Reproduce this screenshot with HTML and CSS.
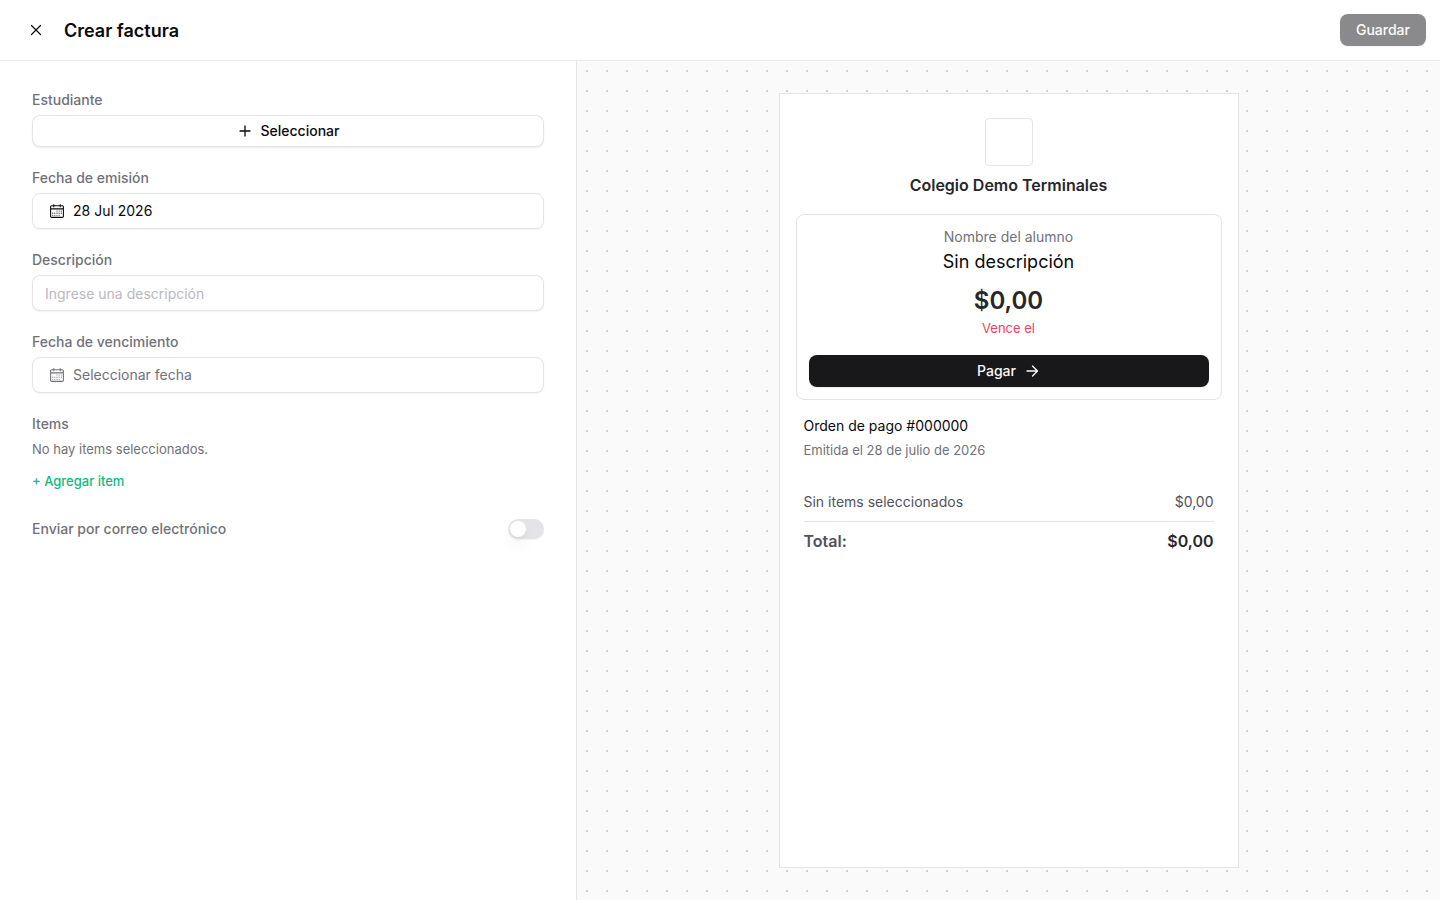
FILE: index.html
```html
<!DOCTYPE html>
<html lang="es">
<head>
    <meta charset="utf-8">
    <meta name="viewport" content="width=device-width, initial-scale=1">
    <title>Crear factura</title>
    <link rel="stylesheet" href="styles.css">
</head>
<body>
    <!-- Calendar icon shared by both date fields -->
    <svg class="sprite" aria-hidden="true">
        <symbol id="calendar" viewBox="0 0 15 15">
            <path fill="currentColor" fill-rule="evenodd" d="M4.5 1a.5.5 0 0 1 .5.5V2h5v-.5a.5.5 0 0 1 1 0V2h1.5A1.5 1.5 0 0 1 14 3.5v9a1.5 1.5 0 0 1-1.5 1.5h-10A1.5 1.5 0 0 1 1 12.5v-9A1.5 1.5 0 0 1 2.5 2H4v-.5a.5.5 0 0 1 .5-.5ZM10 3v.5a.5.5 0 0 0 1 0V3h1.5a.5.5 0 0 1 .5.5V5H2V3.5a.5.5 0 0 1 .5-.5H4v.5a.5.5 0 0 0 1 0V3h5ZM2 6v6.5a.5.5 0 0 0 .5.5h10a.5.5 0 0 0 .5-.5V6H2Z"/>
            <g fill="currentColor">
                <circle cx="7.500" cy="7.500" r=".5"/><circle cx="9.500" cy="7.500" r=".5"/><circle cx="11.500" cy="7.500" r=".5"/>
                <circle cx="3.500" cy="9.500" r=".5"/><circle cx="5.500" cy="9.500" r=".5"/><circle cx="7.500" cy="9.500" r=".5"/><circle cx="9.500" cy="9.500" r=".5"/><circle cx="11.500" cy="9.500" r=".5"/>
                <circle cx="3.500" cy="11.500" r=".5"/><circle cx="5.500" cy="11.500" r=".5"/><circle cx="7.500" cy="11.500" r=".5"/><circle cx="9.500" cy="11.500" r=".5"/>
            </g>
        </symbol>
    </svg>

    <header class="topbar">
        <button class="close" type="button" aria-label="Cerrar">
            <svg viewBox="0 0 16 16" width="16" height="16" fill="none" stroke="currentColor" stroke-width="1.2" stroke-linecap="round"><path d="M3.500 3.500l9 9M12.500 3.500l-9 9"/></svg>
        </button>
        <h1>Crear factura</h1>
        <button class="btn btn-dark save" type="button" disabled>Guardar</button>
    </header>

    <main class="layout">
        <form class="editor">
            <div class="field">
                <label for="student">Estudiante</label>
                <button id="student" class="btn btn-outline" type="button">
                    <svg viewBox="0 0 16 16" width="16" height="16" fill="none" stroke="currentColor" stroke-width="1.3" stroke-linecap="round"><path d="M8 3v10M3 8h10"/></svg>
                    Seleccionar
                </button>
            </div>

            <div class="field">
                <label for="issue-date">Fecha de emisión</label>
                <button id="issue-date" class="control date" type="button">
                    <svg width="16" height="16"><use href="#calendar"/></svg>
                    28 Jul 2026
                </button>
            </div>

            <div class="field">
                <label for="description">Descripción</label>
                <input id="description" class="control" type="text" placeholder="Ingrese una descripción">
            </div>

            <div class="field">
                <label for="due-date">Fecha de vencimiento</label>
                <button id="due-date" class="control date empty" type="button">
                    <svg width="16" height="16"><use href="#calendar"/></svg>
                    Seleccionar fecha
                </button>
            </div>

            <div class="field">
                <h2>Items</h2>
                <p class="hint">No hay items seleccionados.</p>
                <button class="add-item" type="button">+ Agregar item</button>
            </div>

            <div class="switch-row">
                <label for="send-email">Enviar por correo electrónico</label>
                <input id="send-email" class="switch" type="checkbox" role="switch">
            </div>
        </form>

        <section class="preview">
            <article class="invoice">
                <div class="logo"></div>
                <h2 class="school">Colegio Demo Terminales</h2>

                <div class="payment">
                    <p class="student-name">Nombre del alumno</p>
                    <p class="concept">Sin descripción</p>
                    <p class="amount">$0,00</p>
                    <p class="due">Vence el</p>
                    <button class="btn btn-dark pay" type="button">
                        Pagar
                        <svg viewBox="0 0 16 16" width="16" height="16" fill="none" stroke="currentColor" stroke-width="1.3" stroke-linecap="round" stroke-linejoin="round"><path d="M3 8h10.500M8.500 3l5 5-5 5"/></svg>
                    </button>
                </div>

                <div class="details">
                    <p class="order">Orden de pago #000000</p>
                    <p class="issued">Emitida el 28 de julio de 2026</p>
                    <table class="items">
                        <tbody>
                            <tr><td>Sin items seleccionados</td><td>$0,00</td></tr>
                        </tbody>
                        <tfoot>
                            <tr><th scope="row">Total:</th><td>$0,00</td></tr>
                        </tfoot>
                    </table>
                </div>
            </article>
        </section>
    </main>
</body>
</html>
```
FILE: styles.css
```css
* {
    box-sizing: border-box;
}

body {
    margin: 0;
    min-height: 100vh;
    display: flex;
    flex-direction: column;
    font-family: Inter, "Liberation Sans", sans-serif;
    font-size: 14px;
    line-height: 20px;
    color: #09090b;
    background: #fff;
}

h1, h2, p {
    margin: 0;
}

button, input {
    font: inherit;
    color: inherit;
}

.sprite {
    display: none;
}

/* Top bar */
.topbar {
    display: flex;
    align-items: center;
    gap: 12px;
    height: 61px;
    padding: 0 14px 0 20px;
    border-bottom: 1px solid #e8e8ea;
}

.topbar h1 {
    padding-top: 2px;
    font-size: 18px;
    line-height: 28px;
    font-weight: 600;
}

.close {
    display: flex;
    align-items: center;
    justify-content: center;
    width: 32px;
    height: 32px;
    padding: 0;
    border: none;
    background: none;
}

.save {
    margin-left: auto;
}

/* Buttons */
.btn {
    display: flex;
    align-items: center;
    justify-content: center;
    gap: 8px;
    height: 32px;
    padding: 0 16px;
    border: none;
    border-radius: 8px;
    font-weight: 500;
    box-shadow: 0 1px 2px rgba(0, 0, 0, 0.08);
}

.btn-dark {
    background: #18181b;
    color: #fafafa;
}

.btn-dark:disabled {
    opacity: 0.5;
}

.btn-outline {
    border: 1px solid #e4e4e7;
    background: #fff;
}

/* Form on the left, preview on the right */
.layout {
    flex: 1;
    display: grid;
    grid-template-columns: 2fr 3fr;
}

.editor {
    display: flex;
    flex-direction: column;
    gap: 24px;
    padding: 32px;
}

.field {
    display: flex;
    flex-direction: column;
    gap: 8px;
}

label, .field h2 {
    font-size: 14px;
    line-height: 14px;
    font-weight: 500;
    color: #71717a;
}

.control {
    width: 100%;
    height: 36px;
    padding: 0 12px;
    border: 1px solid #e4e4e7;
    border-radius: 8px;
    background: #fff;
    box-shadow: 0 1px 2px rgba(0, 0, 0, 0.06);
}

.control::placeholder {
    color: #b9b9be;
    opacity: 1;
}

.date {
    display: flex;
    align-items: center;
    gap: 8px;
    padding: 0 16px;
    text-align: left;
}

.empty {
    color: #71717a;
}

.hint {
    font-size: 13px;
    color: #71717a;
}

.add-item {
    align-self: flex-start;
    margin: 4px 0;
    padding: 0;
    border: none;
    background: none;
    font-size: 13px;
    font-weight: 500;
    color: #10b981;
}

.switch-row {
    display: flex;
    align-items: center;
    justify-content: space-between;
}

.switch {
    appearance: none;
    width: 36px;
    height: 20px;
    margin: 0;
    padding: 2px;
    border-radius: 10px;
    background: #e4e4e7;
    box-shadow: 0 1px 2px rgba(0, 0, 0, 0.05);
}

.switch::before {
    content: "";
    display: block;
    width: 16px;
    height: 16px;
    border-radius: 50%;
    background: #fff;
    box-shadow: 0 10px 15px -3px rgba(0, 0, 0, 0.1), 0 4px 6px -4px rgba(0, 0, 0, 0.1);
}

.switch:checked::before {
    margin-left: 16px;
}

/* Dotted canvas behind the invoice */
.preview {
    display: flex;
    justify-content: center;
    padding: 32px;
    border-left: 1px solid #e4e4e7;
    background: #fafafa conic-gradient(from 270deg at 2px 2px, #d2d2d4 90deg, transparent 0) 9px 9px / 20px 20px;
}

.invoice {
    display: flex;
    flex-direction: column;
    width: 100%;
    max-width: 460px;
    padding: 24px 16px;
    border: 1px solid #e4e4e7;
    background: #fff;
}

.logo {
    align-self: center;
    width: 48px;
    height: 48px;
    border: 1px solid #e4e4e7;
    border-radius: 4px;
}

.school {
    margin: 7px 0 17px;
    font-size: 16px;
    line-height: 24px;
    font-weight: 600;
    text-align: center;
    color: #27272a;
}

.payment {
    display: flex;
    flex-direction: column;
    padding: 12px;
    border: 1px solid #e4e4e7;
    border-radius: 8px;
    text-align: center;
}

.student-name {
    color: #71717a;
}

.concept {
    font-size: 18px;
    line-height: 30px;
}

.amount {
    margin-top: 8px;
    font-size: 24px;
    line-height: 32px;
    font-weight: 600;
    color: #27272a;
}

.due {
    font-size: 13px;
    line-height: 22px;
    color: #f43f5e;
}

.pay {
    margin-top: 16px;
}

.details {
    padding: 16px 8px;
}

.issued {
    margin-top: 4px;
    font-size: 13px;
    color: #71717a;
}

.items {
    width: 100%;
    margin-top: 32px;
    border-collapse: collapse;
    color: #52525b;
}

.items th, .items td {
    padding: 0 0 9px;
    text-align: left;
}

.items td:last-child {
    text-align: right;
}

.items tfoot th, .items tfoot td {
    padding: 7px 0 0;
    border-top: 1px solid #e4e4e7;
    font-size: 16px;
    line-height: 24px;
    font-weight: 600;
}

.items tfoot td {
    color: #27272a;
}
```
